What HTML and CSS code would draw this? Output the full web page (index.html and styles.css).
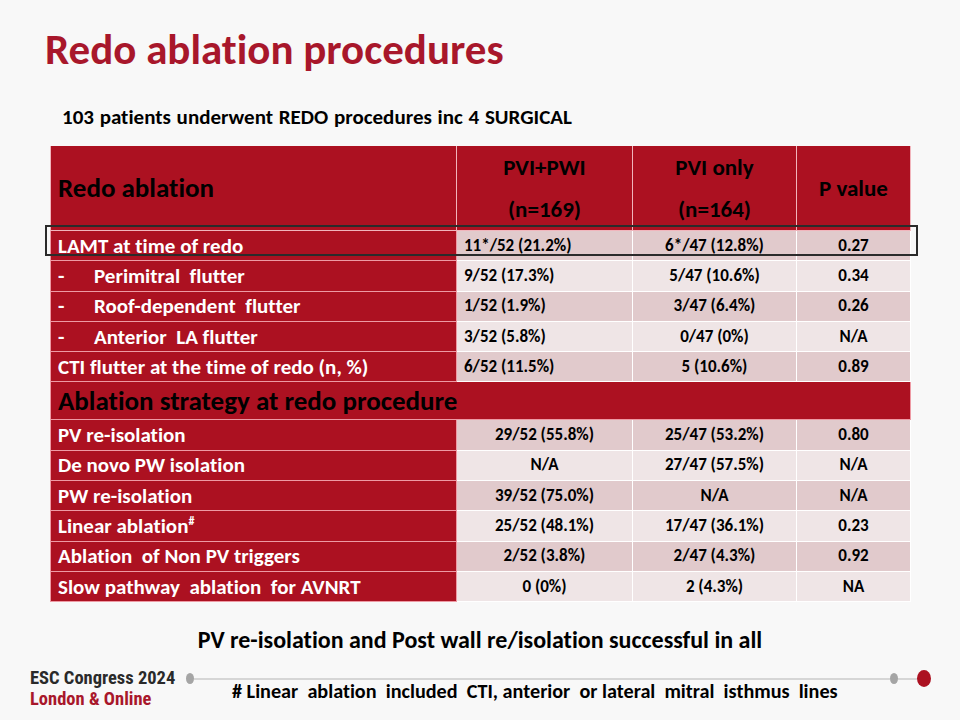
FILE: index.html
```html
<!DOCTYPE html>
<html>
<head>
<meta charset="utf-8">
<link rel="stylesheet" href="styles.css">
</head>
<body>
<div class="page">
  <h1 class="title">Redo ablation procedures</h1>
  <p class="sub">103 patients underwent REDO procedures inc 4 SURGICAL</p>

  <div class="table-wrap">
    <table class="data">
      <colgroup>
        <col class="c1"><col class="c2"><col class="c3"><col class="c4">
      </colgroup>
      <tr class="head">
        <th class="lbl">Redo ablation</th>
        <th><span class="hl">PVI+PWI</span><span class="hl">(n=169)</span></th>
        <th><span class="hl">PVI only</span><span class="hl">(n=164)</span></th>
        <th>P value</th>
      </tr>
      <tr class="dk">
        <td class="lbl">LAMT at time of redo</td>
        <td class="left">11*/52 (21.2%)</td><td>6*/47 (12.8%)</td><td>0.27</td>
      </tr>
      <tr class="lt">
        <td class="lbl"><span class="dash">-</span>Perimitral&nbsp; flutter</td>
        <td class="left">9/52 (17.3%)</td><td>5/47 (10.6%)</td><td>0.34</td>
      </tr>
      <tr class="dk">
        <td class="lbl"><span class="dash">-</span>Roof-dependent&nbsp; flutter</td>
        <td class="left">1/52 (1.9%)</td><td>3/47 (6.4%)</td><td>0.26</td>
      </tr>
      <tr class="lt">
        <td class="lbl"><span class="dash">-</span>Anterior&nbsp; LA flutter</td>
        <td class="left">3/52 (5.8%)</td><td>0/47 (0%)</td><td>N/A</td>
      </tr>
      <tr class="dk">
        <td class="lbl">CTI flutter at the time of redo (n, %)</td>
        <td class="left">6/52 (11.5%)</td><td>5 (10.6%)</td><td>0.89</td>
      </tr>
      <tr class="section">
        <th colspan="4" class="lbl">Ablation strategy at redo procedure</th>
      </tr>
      <tr class="dk">
        <td class="lbl">PV re-isolation</td>
        <td>29/52 (55.8%)</td><td>25/47 (53.2%)</td><td>0.80</td>
      </tr>
      <tr class="lt">
        <td class="lbl">De novo PW isolation</td>
        <td>N/A</td><td>27/47 (57.5%)</td><td>N/A</td>
      </tr>
      <tr class="dk">
        <td class="lbl">PW re-isolation</td>
        <td>39/52 (75.0%)</td><td>N/A</td><td>N/A</td>
      </tr>
      <tr class="lt">
        <td class="lbl">Linear ablation<sup>#</sup></td>
        <td>25/52 (48.1%)</td><td>17/47 (36.1%)</td><td>0.23</td>
      </tr>
      <tr class="dk">
        <td class="lbl">Ablation&nbsp; of Non PV triggers</td>
        <td>2/52 (3.8%)</td><td>2/47 (4.3%)</td><td>0.92</td>
      </tr>
      <tr class="lt">
        <td class="lbl">Slow pathway&nbsp; ablation&nbsp; for AVNRT</td>
        <td>0 (0%)</td><td>2 (4.3%)</td><td>NA</td>
      </tr>
    </table>
    <div class="highlight"></div>
  </div>

  <p class="concl">PV re-isolation and Post wall re/isolation successful in all</p>

  <div class="footer">
    <div class="logo">
      <div class="logo-1">ESC Congress 2024</div>
      <div class="logo-2">London &amp; Online</div>
    </div>
    <div class="rule">
      <span class="dot grey"></span>
      <span class="line"></span>
      <span class="dot grey"></span>
      <span class="line short"></span>
      <span class="dot red"></span>
    </div>
    <p class="note"># Linear&nbsp; ablation&nbsp; included&nbsp; CTI, anterior&nbsp; or lateral&nbsp; mitral&nbsp; isthmus&nbsp; lines</p>
  </div>
</div>
</body>
</html>
```

FILE: styles.css
```css
html, body {
  margin: 0;
  padding: 0;
  background: #f8f8f8;
}

.page {
  width: 960px;
  height: 720px;
  box-sizing: border-box;
  padding-top: 26px;
  font-family: Carlito, Lato, "Liberation Sans", sans-serif;
  font-weight: bold;
  font-variant-ligatures: none;
  font-feature-settings: "liga" 0;
  color: #000;
  overflow: hidden;
}

.title {
  margin: 0 0 0 45px;
  font-size: 43px;
  line-height: 48px;
  color: #a8172b;
  font-weight: bold;
}

.sub {
  margin: 32px 0 0 62px;
  font-size: 21px;
  line-height: 22px;
  word-spacing: 1px;
}

.table-wrap {
  position: relative;
  margin: 18px 0 0 50px;
  width: 860px;
}

.data {
  border-collapse: collapse;
  table-layout: fixed;
  width: 860px;
}

.c1 { width: 406px; }
.c2 { width: 176px; }
.c3 { width: 164px; }
.c4 { width: 114px; }

.data th, .data td {
  border: 1.5px solid #fff;
  padding: 0;
  text-align: center;
  vertical-align: middle;
}

.data td {
  height: 29.3px;
  font-size: 17px;
  line-height: 18px;
}

.data td.left {
  text-align: left;
  padding-left: 7px;
}

.data .lbl {
  background: #ac1121;
  color: #fff;
  text-align: left;
  padding-left: 7px;
  font-size: 21px;
  line-height: 24px;
  border-color: #ee9aa4;
}

.data tr.head th {
  background: #ac1121;
  color: #000;
  height: 73px;
  font-size: 23px;
  line-height: 24px;
  border-color: #f1b5bc;
  border-top: none;
}

.data tr.head th.lbl {
  font-size: 27px;
  color: #000;
}

.hl {
  display: block;
  line-height: 42px;
}

.data tr.section th {
  background: #ac1121;
  color: #000;
  height: 37px;
  font-size: 27px;
  line-height: 30px;
  text-align: left;
}

tr.dk td { background: #e1cacc; }
tr.lt td { background: #efe5e6; }
tr.dk td.lbl, tr.lt td.lbl { background: #ac1121; }

.dash {
  display: inline-block;
  width: 36px;
}

sup {
  font-size: 12px;
  line-height: 0;
  vertical-align: 8px;
}

.highlight {
  position: absolute;
  left: -5px;
  top: 79px;
  width: 869px;
  height: 27px;
  border: 2px solid #2b2b2b;
}

.concl {
  margin: 25px 0 0 0;
  font-size: 24px;
  line-height: 26px;
  text-align: center;
}

.footer {
  margin-top: 15px;
  display: grid;
  grid-template-columns: 156px 1fr;
  padding-left: 30px;
  padding-right: 29px;
}

.logo {
  grid-row: 1 / span 2;
  font-family: "Liberation Sans Narrow", "Roboto Condensed", "Liberation Sans", sans-serif;
  font-weight: bold;
  font-size: 18.5px;
  line-height: 21px;
}

.logo-1 { color: #2a2a2a; }
.logo-2 { color: #a8172b; }

.rule {
  display: flex;
  align-items: center;
  height: 21px;
}

.dot {
  display: block;
  border-radius: 50%;
  flex: none;
}

.dot.grey {
  width: 8px;
  height: 11px;
  background: #a5a5a5;
}

.dot.red {
  width: 14px;
  height: 17px;
  background: #ac1121;
}

.line {
  flex: 1;
  height: 2px;
  background: #d6d6d6;
}

.line.short {
  flex: none;
  width: 19px;
}

.note {
  margin: -17px 0 0 46px;
  font-size: 20.2px;
  line-height: 22px;
}
```
